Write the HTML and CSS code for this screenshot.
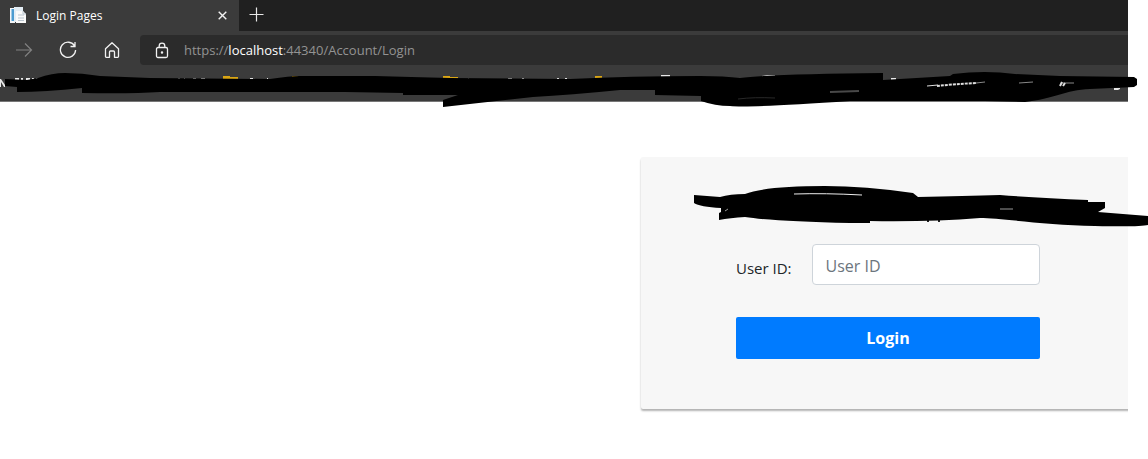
FILE: index.html
```html
<!DOCTYPE html>
<html lang="en">
<head>
    <meta charset="UTF-8">
    <meta name="viewport" content="width=device-width, initial-scale=1.0">
    <title>Login Pages</title>
    <link rel="stylesheet" href="styles.css">
</head>
<body>
    <div class="window">
        <header class="browser">
            <div class="tab-bar">
                <div class="tab">
                    <svg class="favicon" width="17" height="17" viewBox="0 0 17 17">
                        <path d="M0 1h5v15H0z" fill="#f4f6f8"/>
                        <path d="M1.500 2h2.500v12H1.500z" fill="#4c9bd0"/>
                        <path d="M4 0h9v15H4z" fill="#e3edf5"/>
                        <path d="M6 4h7l3 3v9H6z" fill="#fafafa"/>
                        <path d="M13 4v3h3M8 8h6M8 11h6M8 13.500h6" fill="none" stroke="#b9c4ce"/>
                    </svg>
                    <span class="tab-title">Login Pages</span>
                    <button class="icon-button" type="button" aria-label="Close tab">
                        <svg width="9" height="9" viewBox="0 0 9 9"><path d="M.7.7l7.600 7.600M8.300.7L.7 8.300" stroke="#f2f2f2" stroke-width="1.400"/></svg>
                    </button>
                </div>
                <button class="icon-button new-tab" type="button" aria-label="New tab">
                    <svg width="15" height="15" viewBox="0 0 15 15"><path d="M7.500.5v14M.5 7.500h14" stroke="#e8e8e8" stroke-width="1.200"/></svg>
                </button>
            </div>
            <div class="toolbar">
                <button class="icon-button" type="button" aria-label="Forward">
                    <svg width="18" height="18" viewBox="0 0 18 18" fill="none" stroke="#818181" stroke-width="1.200"><path d="M1 9h15.500M10 2.500L16.500 9 10 15.500"/></svg>
                </button>
                <button class="icon-button" type="button" aria-label="Refresh">
                    <svg width="18" height="18" viewBox="0 0 18 18" fill="none" stroke="#f2f2f2" stroke-width="1.300"><path d="M15.700 5.200A7.600 7.600 0 1 0 16.600 9M16 1v4.500h-4.500"/></svg>
                </button>
                <button class="icon-button" type="button" aria-label="Home">
                    <svg width="18" height="18" viewBox="0 0 18 18" fill="none" stroke="#f2f2f2" stroke-width="1.300" stroke-linejoin="round"><path d="M2.500 7.800L9 1.800l6.500 6v7.700q0 .8-.8.8h-3.200V11q0-1-1-1h-3q-1 0-1 1v5.300H3.300q-.8 0-.8-.8z"/></svg>
                </button>
                <div class="address">
                    <svg width="14" height="17" viewBox="0 0 14 17" fill="none" stroke="#f2f2f2" stroke-width="1.300"><rect x="1.500" y="5.500" width="11" height="10" rx="1.500"/><path d="M4.200 5.500V4a2.800 2.800 0 0 1 5.600 0v1.500"/><circle cx="7" cy="10.500" r=".6" fill="#f2f2f2"/></svg>
                    <span class="url">https://<b>localhost</b>:44340/Account/Login</span>
                </div>
            </div>
            <div class="bookmarks"></div>
        </header>
        <main class="page">
            <form class="login-card">
                <div class="login-title"></div>
                <div class="form-row">
                    <label for="userId">User ID:</label>
                    <input type="text" id="userId" placeholder="User ID">
                </div>
                <button class="login-button" type="submit">Login</button>
            </form>
        </main>
    </div>
    <!-- marker strokes over the bookmarks and the card title -->
    <svg class="marker" width="1148" height="459" viewBox="0 0 1148 459" aria-hidden="true">
        <g fill="#e8e8e8">
            <path d="M0 87v-8h1l4 6v2H4l-3-5v5zM15 78h4v2h-4zM21 78h2v2h-2zM26 78h4v2h-4zM32 78h2v2h-2zM36 78h2v1h-2z"/>
            <path d="M178 78h2v1h-2zM184 78h1v1h-1zM193 78h3v1h-3zM201 78h4v1h-4zM250 78h3v1h-3zM267 78h1v1h-1z"/>
            <path d="M468 78h1v1h-1zM508 78h4v1h-4zM522 78h2v1h-2zM557 78h2v1h-2zM565 78h2v1h-2zM661 75h9v2h-9zM762 76l5-1h8v1l-5 2h-8zM891 78h5v2h-5z"/>
            <path d="M1114 88h6v1l-2 1h-4z"/>
        </g>
        <path d="M223 76h7v1h8v3h-15zM292 76h6v2h-6zM443 76h7v1h8v3h-15zM595 76h7v2h-7z" fill="#d9a514"/>
        <path d="M927 220h2v2h-2zM938 220h2v2h-2z" fill="#222"/>
        <path d="M5 79L27 80L38 78Q52 73 65 73Q82 73 100 76L150 78L270 79Q290 76 300 76L375 76Q410 77 450 78L570 79Q630 76 700 76Q725 76 740 78Q770 74 883 73V80L950 76L953 74Q985 70 1015 74L1060 76L1134 77L1137 79V85L1134 87L1090 89C1065 90 1054 99 1025 102L985 101H850Q750 108 730 106Q715 106 701 101V96L655 95V90H620Q570 95 533 97L443 107V100L458 95H403V93L345 92H160Q130 94 82 93V88Q45 92 17 92V87L5 86Z"/>
        <path d="M694 195L720 197Q730 194 745 194Q766 186 825 186Q865 186 913 193L918 197Q965 196 1000 195Q1040 198 1088 200V202H1105V208L1098 212L1148 216V225Q1140 227 1095 226C1045 225 1000 218 980 218Q930 222 870 221V223H850Q770 221 745 217Q730 218 719 220V213L721 212V208Q700 207 694 203Z"/>
        <g fill="none" stroke="#ddd">
            <path d="M794 194Q825 193 862 195" stroke="#eee"/>
            <path d="M725 211l3-2M1000 209h13" stroke="#999"/>
            <path d="M927 86l11-1"/>
            <path d="M937 86Q955 84 976 83" stroke-width="2" stroke-dasharray="3 1"/>
            <path d="M976 83l9-1M1019 83l14-1M1061 83l13 0" stroke="#888"/>
            <path d="M1060 86l2-4M1063 86l2-3" stroke-width="2"/>
            <path d="M738 99q16-2 37-1" stroke="#292929"/>
            <path d="M830 92l29-1" stroke="#494949" stroke-width="2"/>
        </g>
    </svg>
</body>
</html>
```
FILE: styles.css
```css
* {
    box-sizing: border-box;
}
body {
    margin: 0;
    background: #fff;
    font-family: "Open Sans", "Noto Sans", sans-serif;
    position: relative;
}
.window {
    margin-right: 20px;
    overflow: hidden;
}
.browser {
    background: #3b3b3b;
    border-bottom: 1px solid #777;
}
.tab-bar {
    display: flex;
    height: 31px;
    background: #202020;
}
.tab {
    display: flex;
    align-items: center;
    width: 239px;
    padding: 0 12px 0 10px;
    background: #3b3b3b;
}
.tab-title {
    flex: 1;
    margin-left: 9px;
    font-size: 12px;
    color: #fff;
}
.icon-button {
    display: flex;
    align-items: center;
    justify-content: center;
    padding: 0;
    border: 0;
    background: none;
}
.new-tab {
    width: 35px;
    height: 29px;
}
.toolbar {
    display: flex;
    align-items: center;
    gap: 26px;
    padding: 4px 0 4px 15px;
}
.address {
    display: flex;
    flex: 1;
    align-items: center;
    gap: 15px;
    height: 30px;
    margin-left: -7px;
    padding-left: 15px;
    border-radius: 4px 0 0 4px;
    background: #2b2b2b;
}
.url {
    font-size: 13px;
    color: #939393;
}
.url b {
    font-weight: normal;
    color: #fff;
}
.bookmarks {
    height: 32px;
}
.page {
    padding: 55px 0 50px 641px;
}
.login-card {
    width: 494px;
    padding: 30px 95px 50px;
    border-radius: 2px;
    background: #f7f7f7;
    box-shadow: 0 2px 2px rgba(0, 0, 0, 0.3);
}
.login-title {
    height: 57px;
}
.form-row {
    display: flex;
    align-items: center;
    gap: 20px;
    margin-bottom: 32px;
}
.form-row label {
    padding-top: 6px;
    font-size: 15px;
    color: #212529;
    white-space: nowrap;
}
.form-row input {
    flex: 1;
    min-width: 0;
    height: 41px;
    padding: 2px 13px 0;
    border: 1px solid #ced4da;
    border-radius: 4px;
    background: #fff;
    font-family: inherit;
    font-size: 16px;
    color: #495057;
}
.form-row input::placeholder {
    color: #6c757d;
    opacity: 1;
}
.login-button {
    width: 100%;
    height: 42px;
    padding: 0;
    border: 0;
    border-radius: 2px;
    background: #007bff;
    font-family: inherit;
    font-size: 16px;
    font-weight: bold;
    color: #fff;
}
.marker {
    position: absolute;
    top: 0;
    left: 0;
    max-width: 100%;
    pointer-events: none;
}
```
